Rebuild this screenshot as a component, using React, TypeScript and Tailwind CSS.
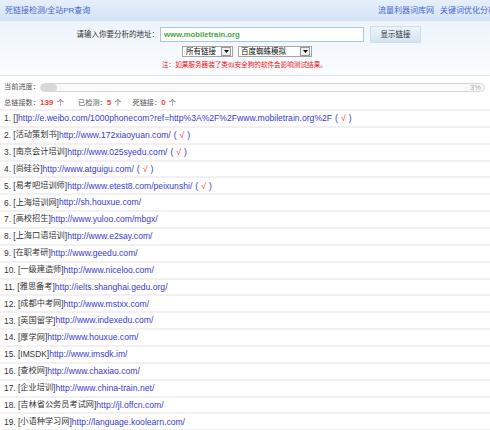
import React from "react";

const rows: [string, string, boolean][] = [
  ["", "http://e.weibo.com/1000phonecom?ref=http%3A%2F%2Fwww.mobiletrain.org%2F", true],
  ["活动策划书", "http://www.172xiaoyuan.com/", true],
  ["南京会计培训", "http://www.025syedu.com/", true],
  ["尚硅谷", "http://www.atguigu.com/", true],
  ["易考吧培训师", "http://www.etest8.com/peixunshi/", true],
  ["上海培训网", "http://sh.houxue.com/", false],
  ["高校招生", "http://www.yuloo.com/mbgx/", false],
  ["上海口语培训", "http://www.e2say.com/", false],
  ["在职考研", "http://www.geedu.com/", false],
  ["一级建造师", "http://www.niceloo.com/", false],
  ["雅思备考", "http://ielts.shanghai.gedu.org/", false],
  ["成都中考网", "http://www.mstxx.com/", false],
  ["英国留学", "http://www.indexedu.com/", false],
  ["厚学网", "http://www.houxue.com/", false],
  ["IMSDK", "http://www.imsdk.im/", false],
  ["查校网", "http://www.chaxiao.com/", false],
  ["企业培训", "http://www.china-train.net/", false],
  ["吉林省公务员考试网", "http://jl.offcn.com/", false],
  ["小语种学习网", "http://language.koolearn.com/", false],
];

function Arrow() {
  return (
    <span className="flex h-[9px] w-[10px] items-center justify-center border border-[#9a9a9a] bg-[#eeeeee]">
      <svg width="5" height="3" viewBox="0 0 5 3">
        <path d="M0 0 L5 0 L2.5 3 Z" fill="#111" />
      </svg>
    </span>
  );
}

export default function App() {
  return (
    <div
      className="w-[490px] h-[430px] overflow-hidden bg-white text-[7.5px] leading-none text-[#333]"
      style={{ fontFamily: '"Liberation Sans", "Noto Sans CJK SC", sans-serif' }}
    >
      {/* header */}
      <div className="flex h-[21px] items-center overflow-hidden whitespace-nowrap bg-gradient-to-b from-[#e6effa] to-[#d3e3f5] text-[8px] text-[#4466d4]">
        <span className="w-[378px] shrink-0 pl-[5px]">死链接检测/全站PR查询</span>
        <span className="shrink-0">流量利器词库网</span>
        <span className="ml-[6px] shrink-0">关键词优化分析</span>
      </div>

      {/* form panel */}
      <div className="flex h-[55px] flex-col border-b border-[#dde7f1] bg-gradient-to-b from-[#edf4fc] to-[#fbfdff] pt-[5px]">
        <div className="flex h-[17px] items-center">
          <span className="w-[160px] pr-[1px] text-right text-[7.5px] text-[#333]">请输入你要分析的地址：</span>
          <div className="flex h-[15px] w-[204px] items-center border border-[#a9c8e6] bg-white pl-[3px]">
            <span className="text-[7.7px] font-bold text-[#3fa83f]">www.mobiletrain.org</span>
          </div>
          <div className="ml-[6px] flex h-[17px] w-[51px] items-center justify-center border border-[#cfdeec] bg-gradient-to-b from-[#eef4fa] to-[#d3e4f3] text-[7.5px] text-[#333]">
            显示链接
          </div>
        </div>
        <div className="mt-[3px] flex h-[11px] items-center pl-[182px]">
          <div className="flex h-[11px] w-[51px] items-center justify-between border border-[#a5a5a5] bg-white pl-[3px] pr-[1px] text-[7.5px] text-[#111]">
            <span>所有链接</span>
            <Arrow />
          </div>
          <div className="ml-[5px] flex h-[11px] w-[74px] items-center justify-between border border-[#a5a5a5] bg-white pl-[2px] pr-[1px] text-[7.5px] text-[#111]">
            <span>百度蜘蛛模拟</span>
            <Arrow />
          </div>
        </div>
        <div className="mt-[5px] pl-[162px] text-[6.6px] text-[#ee1111]">
          注：如果服务器装了类似安全狗的软件会影响测试结果。
        </div>
      </div>

      {/* progress */}
      <div className="mt-[2px] flex h-[18px] items-center whitespace-nowrap pl-[4px] text-[7.2px] text-[#555]">
        <span className="shrink-0">当前进度：</span>
        <div className="relative flex h-[9px] w-[445px] shrink-0 items-center rounded-full border border-[#d6d6d6] bg-[#f9f9f9]">
          <div className="h-[7px] w-[16px] rounded-full bg-[#d8d8d8]" />
          <span className="absolute right-[3px] top-[0px] text-[7.5px] text-[#aaa]">3%</span>
        </div>
      </div>

      {/* stats */}
      <div className="flex h-[13px] items-center whitespace-nowrap pl-[4px] text-[7.2px] text-[#555]">
        <span>总链接数：</span>
        <span className="text-[8px] font-bold text-[#f04040]">139</span>
        <span className="ml-[3.5px]">个</span>
        <span className="ml-[14px]">已检测：</span>
        <span className="text-[8px] font-bold text-[#f04040]">5</span>
        <span className="ml-[3px]">个</span>
        <span className="ml-[11px]">死链接：</span>
        <span className="text-[8px] font-bold text-[#f04040]">0</span>
        <span className="ml-[3px]">个</span>
      </div>

      {/* list */}
      <div className="border-t-2 border-[#f1f1f1]">
        {rows.map(([name, url, ok], i) => {
          const latin = /^[\x00-\x7f]*$/.test(name);
          return (
            <div
              key={i}
              className="flex h-[16.86px] items-center whitespace-nowrap border-b-2 border-[#f1f1f1] pl-[4px]"
            >
              <span className="text-[8.4px] text-[#333]">{i + 1}. [</span>
              <span className={latin ? "text-[8.4px] text-[#333]" : "text-[8.2px] text-[#333]"}>{name}</span>
              <span className="text-[8.4px] text-[#333]">]</span>
              <span className="text-[8.6px] text-[#3a3ad2]">{url}</span>
              {ok && (
                <span className="ml-[3px] text-[8.6px] text-[#3a3ad2]">
                  (<span className="mx-[3px] text-[#ee2222]">√</span>)
                </span>
              )}
            </div>
          );
        })}
      </div>
    </div>
  );
}
